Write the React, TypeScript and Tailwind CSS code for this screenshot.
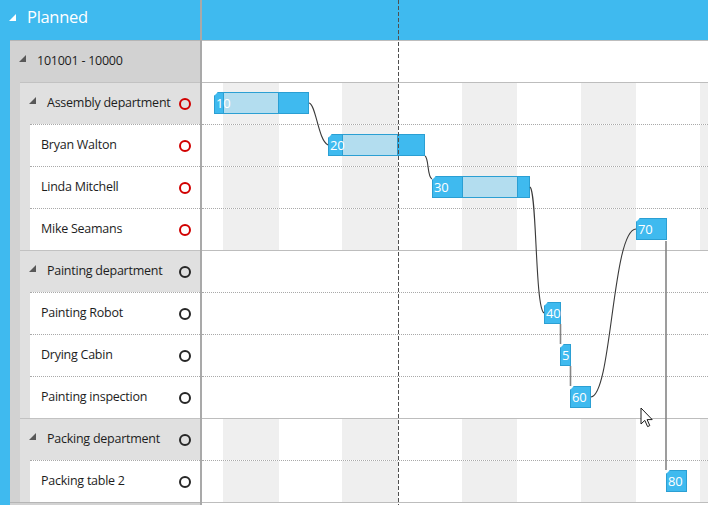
import React from "react";

// Gantt-like planner view: tree of departments on the left, timeline on the right

type Bar = {
  left: number;
  width: number;
  label: string;
  light?: [number, number];
};

type Row = {
  line: "solid" | "dotted";
  stripes: boolean;
  bar?: Bar;
};

const STRIPES: [number, number][] = [
  [21, 56],
  [140, 56],
  [260, 55],
  [379, 55],
  [498, 8],
];

const ROWS: Row[] = [
  { line: "solid", stripes: false },
  { line: "solid", stripes: true, bar: { left: 12, width: 95, label: "10", light: [8, 56] } },
  { line: "dotted", stripes: true, bar: { left: 126, width: 97, label: "20", light: [13, 56] } },
  { line: "dotted", stripes: true, bar: { left: 230, width: 98, label: "30", light: [29, 56] } },
  { line: "dotted", stripes: true, bar: { left: 434, width: 31, label: "70" } },
  { line: "solid", stripes: false },
  { line: "dotted", stripes: false, bar: { left: 342, width: 17, label: "40" } },
  { line: "dotted", stripes: false, bar: { left: 358, width: 11, label: "5" } },
  { line: "dotted", stripes: false, bar: { left: 368, width: 21, label: "60" } },
  { line: "solid", stripes: true },
  { line: "dotted", stripes: true, bar: { left: 464, width: 21, label: "80" } },
];

const DEPARTMENTS = [
  {
    name: "Assembly department",
    red: true,
    items: ["Bryan Walton", "Linda Mitchell", "Mike Seamans"],
  },
  {
    name: "Painting department",
    red: false,
    items: ["Painting Robot", "Drying Cabin", "Painting inspection"],
  },
  {
    name: "Packing department",
    red: false,
    items: ["Packing table 2"],
  },
];

function Triangle({ white }: { white?: boolean }) {
  return (
    <svg width="7" height="7" viewBox="0 0 7 7" className="mb-[6px] shrink-0">
      <polygon points="7,0 7,7 0,7" fill={white ? "#ffffff" : "#585858"} />
    </svg>
  );
}

function Status({ red }: { red: boolean }) {
  return (
    <div
      className={
        red
          ? "h-[12px] w-[12px] shrink-0 rounded-full border-2 border-[#d10000]"
          : "h-[12px] w-[12px] shrink-0 rounded-full border-2 border-[#262626]"
      }
    />
  );
}

function GanttBar({ bar }: { bar: Bar }) {
  return (
    <div
      className="absolute top-[9px] h-[22px] border border-[#2b9fd3] bg-[#3fbaef] [clip-path:polygon(4px_0,100%_0,100%_100%,0_100%,0_4px)]"
      style={{ left: bar.left, width: bar.width }}
    >
      {bar.light && (
        <div
          className="absolute top-0 bottom-0 border-x border-[#2b9fd3] bg-[#b3ddef]"
          style={{ left: bar.light[0], width: bar.light[1] }}
        />
      )}
      <span className="absolute left-[1px] top-0 text-[13px] leading-[20px] tracking-[-0.3px] text-white">
        {bar.label}
      </span>
    </div>
  );
}

export default function App() {
  return (
    <div className="relative h-[505px] w-[708px] overflow-hidden whitespace-nowrap bg-white font-['Open_Sans','Noto_Sans',sans-serif] text-[12.5px] tracking-[-0.25px] text-[#1d1d1d]">
      {/* header */}
      <div className="flex h-[40px] bg-[#3fbaef]">
        <div className="flex w-[200px] items-center gap-[11px] pl-[9px] text-[16.5px] tracking-[-0.3px] text-white">
          <Triangle white />
          <span className="mb-[5px]">Planned</span>
        </div>
        <div className="w-[2px] bg-[#a9a9a9]" />
        <div className="flex-1" />
      </div>

      <div className="flex h-[465px]">
        <div className="w-[10px] bg-[#3fbaef]" />

        {/* tree */}
        <div className="w-[190px] bg-[#d2d2d2]">
          <div className="border-b border-[#b5b5b5]">
            <div className="flex h-[42px] items-center gap-[11px] border-t border-[#b5b5b5] pl-[9px]">
              <Triangle />
              <span>101001 - 10000</span>
            </div>
            {DEPARTMENTS.map((d) => (
              <div key={d.name} className="ml-[10px] bg-[#e0e0e0]">
                <div className="flex h-[42px] items-center border-t border-[#c2c2c2] pl-[9px] pr-[9px]">
                  <Triangle />
                  <span className="ml-[11px] flex-1">{d.name}</span>
                  <Status red={d.red} />
                </div>
                {d.items.map((it) => (
                  <div
                    key={it}
                    className="ml-[10px] flex h-[42px] items-center border-t border-dotted border-[#a9a9a9] bg-white pl-[11px] pr-[9px]"
                  >
                    <span className="flex-1">{it}</span>
                    <Status red={d.red} />
                  </div>
                ))}
              </div>
            ))}
          </div>
        </div>

        <div className="w-[2px] bg-[#a9a9a9]" />

        {/* timeline */}
        <div className="flex-1">
          <div className="border-b border-[#bdbdbd]">
            {ROWS.map((r, i) => (
              <div
                key={i}
                className={
                  r.line === "solid"
                    ? "relative h-[42px] border-t border-[#bdbdbd]"
                    : "relative h-[42px] border-t border-dotted border-[#a9a9a9]"
                }
              >
                {r.stripes &&
                  STRIPES.map(([l, w]) => (
                    <div
                      key={l}
                      className="absolute top-0 bottom-0 bg-[#efefef]"
                      style={{ left: l, width: w }}
                    />
                  ))}
                {r.bar && <GanttBar bar={r.bar} />}
              </div>
            ))}
          </div>
        </div>
      </div>

      {/* links and today marker */}
      <svg
        className="pointer-events-none absolute left-0 top-0"
        width="708"
        height="505"
        viewBox="0 0 708 505"
      >
        <line x1="398.5" y1="0" x2="398.5" y2="505" stroke="#4f4f4f" strokeDasharray="4 2" />
        <g fill="none" stroke="#3a3a3a" strokeWidth="1.1">
          <path d="M309,103 C316,104 318,140 328,145" />
          <path d="M425,156 C429,158 427,177 432,179" />
          <path d="M530,187 C537,192 535,308 544,313" />
          <path d="M591,397 C612,395 612,230 636,229" />
        </g>
        <g stroke="#858585" strokeWidth="1.6">
          <line x1="560.5" y1="324" x2="560.5" y2="344" />
          <line x1="570.5" y1="366" x2="570.5" y2="386" />
          <line x1="666" y1="241" x2="666" y2="470" />
        </g>
      </svg>

      {/* mouse pointer */}
      <svg
        className="pointer-events-none absolute left-[640px] top-[407px]"
        width="14"
        height="22"
        viewBox="0 0 14 22"
      >
        <path
          d="M1,1 L1,17 L4.8,13.4 L7.6,19.6 L9.8,18.6 L7.1,12.6 L12.2,12.6 Z"
          fill="#ffffff"
          stroke="#1a1a1a"
          strokeWidth="1"
          strokeLinejoin="round"
        />
      </svg>
    </div>
  );
}
